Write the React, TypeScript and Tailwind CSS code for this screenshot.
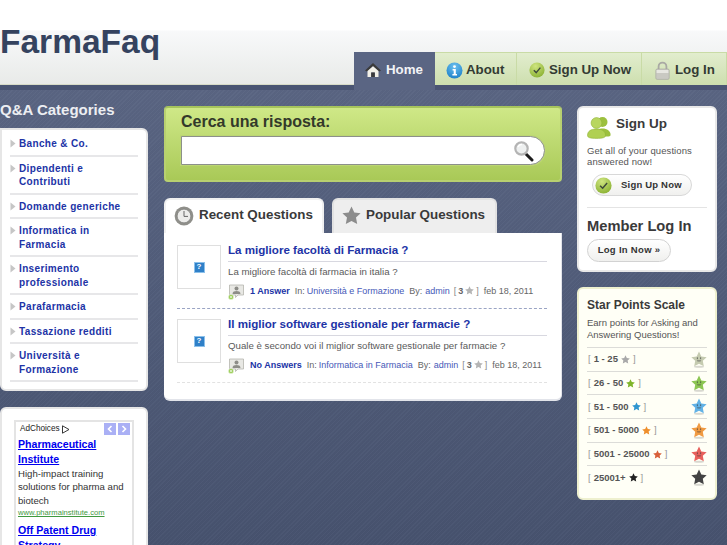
import React from "react";

const font = "font-['Liberation_Sans',Arial,sans-serif]";

function House() {
  return (
    <svg width="18" height="18" viewBox="0 0 18 18">
      <path d="M9 2 L17 9.5 L15 10.5 L9 5 L3 10.5 L1 9.5 Z" fill="#3a3a3a" />
      <path d="M3.5 10 L9 5.2 L14.5 10 V16 H10.8 V11.5 H7.2 V16 H3.5 Z" fill="#f2f0e8" />
      <rect x="7.2" y="11.5" width="3.6" height="4.5" fill="#3a3a3a" />
    </svg>
  );
}

function InfoBall() {
  return (
    <svg width="17" height="17" viewBox="0 0 17 17">
      <defs>
        <radialGradient id="ballBlue" cx="50%" cy="25%" r="80%">
          <stop offset="0%" stopColor="#6cc0ef" />
          <stop offset="100%" stopColor="#1a7fc8" />
        </radialGradient>
      </defs>
      <circle cx="8.5" cy="8.5" r="8" fill="url(#ballBlue)" />
      <circle cx="8.5" cy="4.6" r="1.4" fill="#fff" />
      <path d="M6.6 7 H9.8 V12 H11 V13.4 H6.4 V12 H7.7 V8.4 H6.6 Z" fill="#fff" />
    </svg>
  );
}

function CheckBall({ size = 16 }: { size?: number }) {
  return (
    <svg width={size} height={size} viewBox="0 0 16 16" className="shrink-0">
      <defs>
        <radialGradient id="ballGreen" cx="40%" cy="25%" r="85%">
          <stop offset="0%" stopColor="#cfe580" />
          <stop offset="100%" stopColor="#85ad2c" />
        </radialGradient>
      </defs>
      <circle cx="8" cy="8" r="7.6" fill="url(#ballGreen)" />
      <path d="M4.8 8.2 L7.2 10.6 L11.4 5.6" fill="none" stroke="#3f4a3a" strokeWidth="1.4" />
    </svg>
  );
}

function Padlock() {
  return (
    <svg width="15" height="19" viewBox="0 0 15 19">
      <path d="M3.6 9 V5.5 A3.9 3.9 0 0 1 11.4 5.5 V9" fill="none" stroke="#a9a9a4" strokeWidth="1.8" />
      <rect x="0.8" y="8" width="13.4" height="10.4" rx="1.4" fill="#c9c9c2" stroke="#a4a49e" strokeWidth="0.6" />
      <rect x="1.6" y="9" width="11.8" height="3" fill="#e7e7e1" />
    </svg>
  );
}

function Magnifier() {
  return (
    <svg width="22" height="22" viewBox="0 0 22 22">
      <path d="M12.5 13.5 L19 20" stroke="#1d1d1d" strokeWidth="3" strokeLinecap="round" />
      <circle cx="8.5" cy="8.5" r="6.2" fill="#eef0f0" stroke="#b4b4b4" strokeWidth="2.2" />
      <path d="M5 7 A4 4 0 0 1 9 4.5" fill="none" stroke="#fff" strokeWidth="1.4" />
    </svg>
  );
}

function Clock() {
  return (
    <svg width="20" height="20" viewBox="0 0 20 20" className="shrink-0">
      <circle cx="10" cy="10" r="9.4" fill="#8f8f8a" />
      <circle cx="10" cy="10" r="6.8" fill="#ececea" stroke="#6f6f6c" strokeWidth="0.5" />
      <path d="M10 5 V10.4 H14" fill="none" stroke="#666" strokeWidth="1" />
    </svg>
  );
}

function GreyStar() {
  return (
    <svg width="19" height="19" viewBox="0 0 19 19" className="shrink-0">
      <path d="M9.5 .6 L12.3 6.4 L18.6 7.2 L14 11.6 L15.2 18 L9.5 14.9 L3.8 18 L5 11.6 L.4 7.2 L6.7 6.4 Z" fill="#8c8c8c" />
    </svg>
  );
}

function PeopleIcon() {
  return (
    <svg width="24" height="23" viewBox="0 0 24 23" className="shrink-0">
      <circle cx="15.5" cy="6" r="5" fill="#9cc03e" />
      <path d="M9 20 C9 14 12 12.5 15.5 12.5 C20 12.5 23.6 15 23.6 19 C23.6 20 22 20.5 20 20.5 H11 Z" fill="#9cc03e" />
      <circle cx="9.5" cy="7" r="5.4" fill="#b8d65f" stroke="#8fb236" strokeWidth="0.6" />
      <path d="M.5 19.5 C.5 15 4 13 9.5 13 C15 13 18.5 15 18.5 19.5 C18.5 21.5 16 22.4 9.5 22.4 C3 22.4 .5 21.5 .5 19.5 Z" fill="#b0d052" stroke="#8fb236" strokeWidth="0.6" />
    </svg>
  );
}

function AnswerIcon() {
  return (
    <svg width="16" height="16" viewBox="0 0 16 16" className="shrink-0">
      <path d="M1.5 1 H15.5 V11 H10 L7.5 13.5 V11 H1.5 Z" fill="#e8e8e4" stroke="#b5b5ae" strokeWidth="0.8" />
      <circle cx="8.5" cy="4.4" r="2" fill="#8d8d88" />
      <path d="M4.5 10 C4.5 7.6 6.5 7 8.5 7 C10.5 7 12.5 7.6 12.5 10 Z" fill="#8d8d88" />
      <circle cx="3" cy="13" r="2.6" fill="#8cc63f" stroke="#fff" strokeWidth="0.5" />
      <path d="M3 11.6 V14.4 M1.6 13 H4.4" stroke="#fff" strokeWidth="0.8" />
    </svg>
  );
}

function BrokenImage() {
  return (
    <span className="flex h-[11px] w-[11px] items-center justify-center border border-[#8cc0ea] bg-[#2f80c8] text-[8px] leading-none font-bold text-white">
      ?
    </span>
  );
}

function TinyStar({ color }: { color: string }) {
  return (
    <svg width="9" height="9" viewBox="0 0 19 19" className="inline-block align-[-0.5px]">
      <path d="M9.5 .6 L12.3 6.4 L18.6 7.2 L14 11.6 L15.2 18 L9.5 14.9 L3.8 18 L5 11.6 L.4 7.2 L6.7 6.4 Z" fill={color} />
    </svg>
  );
}

function FaceStar({ color }: { color: string }) {
  return (
    <svg width="16" height="17" viewBox="0 0 19 20">
      <ellipse cx="9.5" cy="18.6" rx="6" ry="1.2" fill="#d8d8d0" />
      <path d="M9.5 .6 L12.3 6.4 L18.6 7.2 L14 11.6 L15.2 18 L9.5 14.9 L3.8 18 L5 11.6 L.4 7.2 L6.7 6.4 Z" fill={color} />
      <rect x="7" y="7.4" width="1" height="2.2" fill="#3d3d3d" fillOpacity="0.8" />
      <rect x="11" y="7.4" width="1" height="2.2" fill="#3d3d3d" fillOpacity="0.8" />
      <path d="M6.8 11 H12.2 L11.3 12.4 H7.7 Z" fill="#3d3d3d" fillOpacity="0.5" />
    </svg>
  );
}

const categories = [
  ["Banche & Co."],
  ["Dipendenti e", "Contributi"],
  ["Domande generiche"],
  ["Informatica in", "Farmacia"],
  ["Inserimento", "professionale"],
  ["Parafarmacia"],
  ["Tassazione redditi"],
  ["Università e", "Formazione"],
];

const scale = [
  { label: "1 - 25", tiny: "#a9a9a9", face: "#c5cbb0" },
  { label: "26 - 50", tiny: "#7fb52a", face: "#8cc653" },
  { label: "51 - 500", tiny: "#2f96d0", face: "#62b2e6" },
  { label: "501 - 5000", tiny: "#ef8f2c", face: "#f09a42" },
  { label: "5001 - 25000", tiny: "#d9603a", face: "#e8605c" },
  { label: "25001+", tiny: "#222222", face: "#444444" },
];

function NavTab({ icon, label, sizing }: { icon: React.ReactNode; label: string; sizing: string }) {
  return (
    <div
      className={`flex h-[33px] items-center border-t border-r border-[#c9dba6] bg-gradient-to-b from-[#e2edce] to-[#cddfae] pt-[2px] text-[13.3px] font-bold text-[#333b33] ${sizing}`}
    >
      {icon}
      <span>{label}</span>
    </div>
  );
}

function Question({
  title,
  desc,
  answers,
  category,
}: {
  title: string;
  desc: string;
  answers: string;
  category: string;
}) {
  return (
    <div className="flex gap-[7px]">
      <div className="flex h-[44px] w-[44px] shrink-0 items-center justify-center border border-[#dfdfdf]">
        <BrokenImage />
      </div>
      <div className="-mt-[3px] min-w-0 flex-1">
        <div className="h-[15px] text-[11.6px] leading-[15px] font-bold whitespace-nowrap text-[#2133a6]">{title}</div>
        <div className="mt-[4px] border-t border-[#d8d8e0] pt-[2px] text-[9.7px] leading-[15px] whitespace-nowrap text-[#5a5a5a]">
          {desc}
        </div>
        <div className="mt-[5px] flex h-[16px] items-center text-[9px] whitespace-nowrap text-[#666]">
          <AnswerIcon />
          <span className="ml-[6px] font-bold text-[#2133a6]">{answers}</span>
          <span className="ml-[5px]">In:</span>
          <span className="ml-[2px] text-[#4658b8]">{category}</span>
          <span className="ml-[5px]">By:</span>
          <span className="ml-[3px] text-[#4658b8]">admin</span>
          <span className="ml-[4px] text-[#888]">[</span>
          <span className="ml-[2px] font-bold text-[#666]">3</span>
          <span className="ml-[2px]"><TinyStar color="#b5b5b5" /></span>
          <span className="ml-[2px] text-[#888]">]</span>
          <span className="ml-[5px]">feb 18, 2011</span>
        </div>
      </div>
    </div>
  );
}

export default function App() {
  return (
    <div
      className={`h-[545px] w-[727px] overflow-hidden bg-[repeating-linear-gradient(135deg,rgba(255,255,255,0.02)_0px,rgba(255,255,255,0.02)_1px,rgba(0,0,0,0.02)_1px,rgba(0,0,0,0.02)_3px),linear-gradient(to_bottom,#5e6987,#47536f)] ${font}`}
    >
      {/* Masthead */}
      <header className="h-[90px] bg-[#4a5573]">
        <div className="flex h-[85px] items-end justify-between border-b border-[#d8dcc8] bg-[linear-gradient(to_bottom,#ffffff_0px,#ffffff_30px,#f8f9fa_31px,#e8eae8_85px)]">
          <div className="mb-[19px] text-[33.5px] leading-[46px] font-bold text-[#35435f]">FarmaFaq</div>
          <nav className="-mb-px flex h-[33px] items-start">
            <div className="flex h-[38px] w-[81px] items-center gap-[4px] bg-[#5a6583] pb-[3px] pl-[10px] text-[13.3px] font-bold text-[#f2f3f6]">
              <House />
              <span>Home</span>
            </div>
            <NavTab icon={<InfoBall />} label="About" sizing="w-[82px] gap-[3px] pl-[11px]" />
            <NavTab icon={<CheckBall />} label="Sign Up Now" sizing="w-[125px] gap-[4px] pl-[12px]" />
            <NavTab icon={<Padlock />} label="Log In" sizing="w-[85px] gap-[5px] pl-[13px]" />
          </nav>
        </div>
      </header>

      <main className="flex items-start pt-[12px]">
        {/* Left column */}
        <aside className="w-[148px] shrink-0">
          <h2 className="h-[26px] text-[15px] leading-[16px] font-bold text-[#eceef2]">Q&amp;A Categories</h2>
          <div className="h-[263px] rounded-r-[6px] rounded-bl-[6px] border-2 border-[#e6e6e6] bg-white pt-[2px] pr-[8px] pl-[8px]">
            {categories.map((lines) => (
              <div key={lines[0]} className="flex border-b-2 border-[#e7e7e9] pt-[5px] pb-[4px]">
                <svg width="6" height="9" viewBox="0 0 6 9" className="mt-[2px] shrink-0">
                  <path d="M0.5 0.5 L5.5 4.5 L0.5 8.5 Z" fill="#c6c6c6" />
                </svg>
                <div className="ml-[3px] text-[10px] leading-[13.5px] font-bold tracking-[0.35px] text-[#2133a6]">
                  {lines.map((l) => (
                    <div key={l}>{l}</div>
                  ))}
                </div>
              </div>
            ))}
          </div>

          <div className="mt-[16px] h-[200px] rounded-r-[6px] rounded-tl-[6px] border-2 border-[#e6e6e6] bg-white pt-[11px] pl-[12px]">
            <div className="h-[170px] w-[120px] border-2 border-[#e4e4e4] px-[2px] pt-[1px]">
              <div className="flex h-[12px] items-center justify-between">
                <div className="ml-[2px] flex items-center gap-[1px] text-[8.2px] text-[#222]">
                  AdChoices
                  <svg width="9" height="9" viewBox="0 0 9 9">
                    <path d="M1.5 .8 L8 4.5 L1.5 8.2 Z" fill="none" stroke="#222" strokeWidth="0.9" />
                  </svg>
                </div>
                <div className="flex gap-[2px]">
                  <span className="flex h-[12px] w-[12px] items-center justify-center bg-[#aab0f5]">
                    <svg width="8" height="8" viewBox="0 0 8 8"><path d="M5.5 1 L2.5 4 L5.5 7" fill="none" stroke="#fff" strokeWidth="1.6" /></svg>
                  </span>
                  <span className="flex h-[12px] w-[12px] items-center justify-center bg-[#aab0f5]">
                    <svg width="8" height="8" viewBox="0 0 8 8"><path d="M2.5 1 L5.5 4 L2.5 7" fill="none" stroke="#fff" strokeWidth="1.6" /></svg>
                  </span>
                </div>
              </div>
              <div className="mt-[2px] text-[10.6px] leading-[15px] font-bold text-[#0000ee] underline">Pharmaceutical Institute</div>
              <div className="text-[9.6px] leading-[13.4px] text-[#333]">High-impact training solutions for pharma and biotech</div>
              <div className="text-[7.6px] leading-[11px] text-[#3f9a3f] underline">www.pharmainstitute.com</div>
              <div className="mt-[5px] text-[10.6px] leading-[15px] font-bold text-[#0000ee] underline">Off Patent Drug Strategy</div>
            </div>
          </div>
        </aside>

        {/* Centre column */}
        <section className="ml-[16px] w-[398px] shrink-0 pt-[4px]">
          <div className="h-[76px] rounded-[4px] border-2 border-t-[#a6c45c] border-r-[#b8d070] border-b-[#b8d070] border-l-[#b8d070] bg-gradient-to-b from-[#cfe887] to-[#a9c957] pt-[4px] pr-[15px] pl-[15px]">
            <div className="text-[16px] leading-[20px] font-bold text-[#33392a]">Cerca una risposta:</div>
            <div className="mt-[4px] flex h-[29px] items-center justify-end rounded-r-[15px] border border-[#8c908a] bg-white pr-[9px] shadow-[0_0_0_1px_#bcd673]">
              <Magnifier />
            </div>
          </div>

          <div className="mt-[16px] flex items-end gap-[8px]">
            <div className="flex h-[35px] w-[160px] items-center gap-[5px] rounded-t-[6px] border-2 border-b-0 border-[#f0f0f0] bg-white pb-[2px] pl-[8px] text-[13.4px] font-bold text-[#3a3a3a]">
              <Clock />
              <span>Recent Questions</span>
            </div>
            <div className="flex h-[35px] w-[165px] items-center gap-[5px] rounded-t-[6px] border-2 border-b-0 border-[#e2e2e2] bg-[#eeeeee] pb-[2px] pl-[8px] text-[13.4px] font-bold text-[#3a3a3a]">
              <GreyStar />
              <span>Popular Questions</span>
            </div>
          </div>

          <div className="h-[168px] rounded-b-[6px] border-r border-b-2 border-[#e2e4ea] bg-white pt-[12px] pr-[14px] pl-[13px]">
            <Question
              title="La migliore facoltà di Farmacia ?"
              desc="La migliore facoltà di farmacia in italia ?"
              answers="1 Answer"
              category="Università e Formazione"
            />
            <div className="mt-[8px] mb-[10px] border-t border-dashed border-[#9aa4c4]" />
            <Question
              title="Il miglior software gestionale per farmacie ?"
              desc="Quale è secondo voi il miglior software gestionale per farmacie ?"
              answers="No Answers"
              category="Informatica in Farmacia"
            />
            <div className="mt-[8px] border-t border-dashed border-[#e2e2e2]" />
          </div>
        </section>

        {/* Right column */}
        <aside className="ml-[15px] w-[140px] shrink-0 pt-[4px]">
          <div className="h-[166px] rounded-[6px] border-2 border-[#e8e8e8] bg-white pt-[7px] pr-[8px] pl-[8px]">
            <div className="flex h-[24px] items-center gap-[5px]">
              <PeopleIcon />
              <span className="pb-[5px] text-[13.5px] font-bold text-[#3a3a3a]">Sign Up</span>
            </div>
            <p className="mt-[6px] text-[9.5px] leading-[11px] tracking-[0.1px] text-[#555]">
              Get all of your questions answered now!
            </p>
            <div className="mt-[7px] ml-[5px] flex h-[22px] w-[100px] items-center gap-[9px] rounded-full border border-[#d8d8d8] bg-gradient-to-b from-white to-[#f0f0ee] pt-[1px] pl-[2px] text-[9.5px] font-bold tracking-[0.2px] text-[#333]">
              <CheckBall size={17} />
              <span>Sign Up Now</span>
            </div>
            <div className="mt-[11px] border-t border-[#e4e4e4]" />
            <div className="mt-[10px] text-[14.7px] leading-[17px] font-bold text-[#3a3a3a]">Member Log In</div>
            <div className="mt-[4px] flex h-[23px] w-[84px] items-center justify-center rounded-full border border-[#d2d2d2] bg-gradient-to-b from-white to-[#f0f0ee] text-[9.5px] font-bold tracking-[0.3px] text-[#333]">
              Log In Now »
            </div>
          </div>

          <div className="mt-[15px] h-[213px] rounded-[6px] border-2 border-[#eef0cf] bg-[#fffff6] pt-[9px] pr-[8px] pl-[8px]">
            <div className="text-[12px] leading-[15px] font-bold text-[#3a3a3a]">Star Points Scale</div>
            <p className="mt-[4px] text-[9.5px] leading-[12px] text-[#555]">Earn points for Asking and Answering Questions!</p>
            <div className="mt-[6px]">
              {scale.map((row) => (
                <div key={row.label} className="flex h-[23.7px] items-center justify-between border-t border-[#dcdcd8] pl-[1px] text-[9.5px] font-bold text-[#555]">
                  <span className="flex items-center gap-[3px]">
                    <span className="font-normal text-[#999]">[</span>
                    <span>{row.label}</span>
                    <TinyStar color={row.tiny} />
                    <span className="font-normal text-[#999]">]</span>
                  </span>
                  <FaceStar color={row.face} />
                </div>
              ))}
            </div>
          </div>
        </aside>
      </main>
    </div>
  );
}
